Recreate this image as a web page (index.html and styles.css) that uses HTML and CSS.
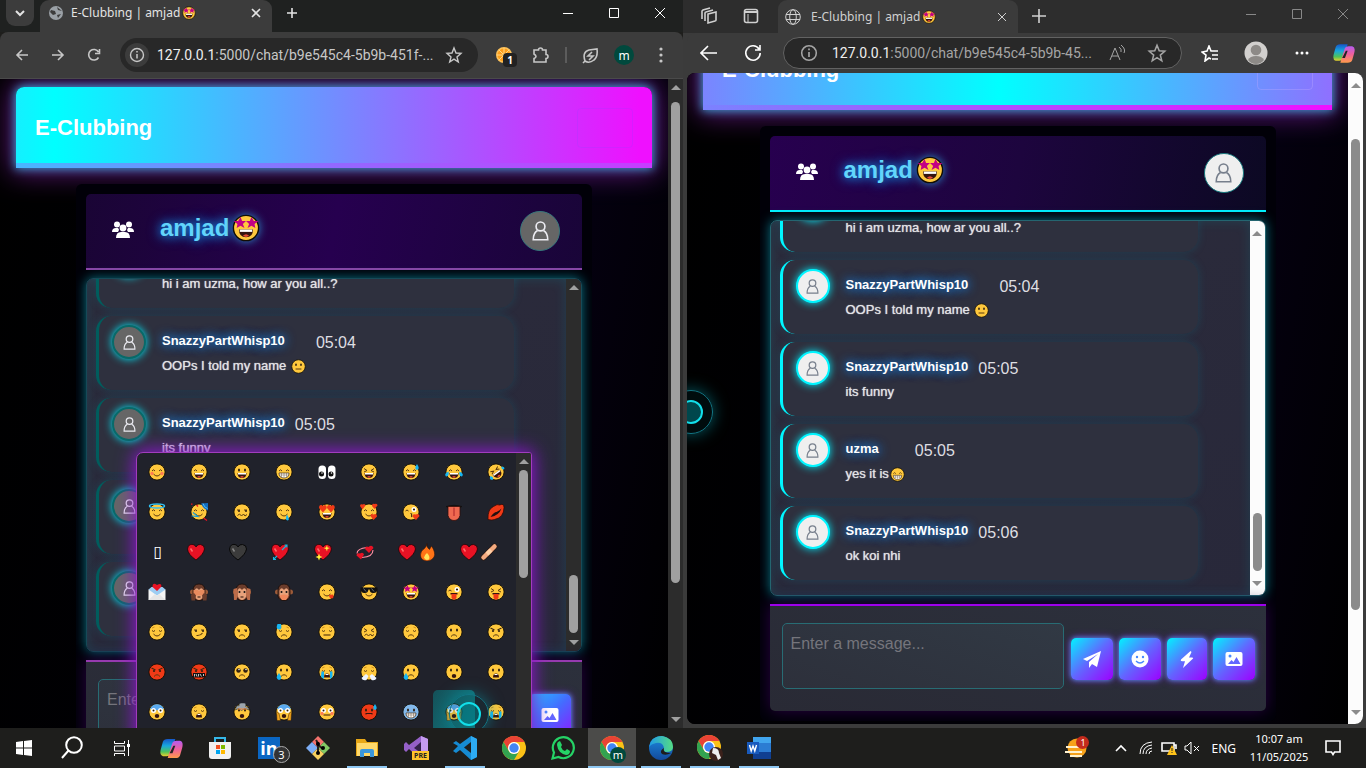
FILE: index.html
```html
<!DOCTYPE html>
<html lang="en">
<head>
<meta charset="utf-8">
<meta name="viewport" content="width=device-width, initial-scale=1">
<title>E-Clubbing | amjad</title>
<link rel="stylesheet" href="styles.css">
</head>
<body class="desktop">
<svg class="defs" aria-hidden="true">
  <defs>
    <linearGradient id="cp1" x1="0" y1="0" x2="0" y2="1"><stop offset="0" stop-color="#1657c9"/><stop offset=".4" stop-color="#18a7dd"/><stop offset=".75" stop-color="#4fc35a"/><stop offset="1" stop-color="#e8cf2c"/></linearGradient>
    <linearGradient id="cp2" x1="0" y1="0" x2="0" y2="1"><stop offset="0" stop-color="#b55bf0"/><stop offset=".5" stop-color="#f0609a"/><stop offset="1" stop-color="#ff9b4a"/></linearGradient>
    <linearGradient id="edge1" x1="0" y1="0" x2="1" y2="0"><stop offset="0" stop-color="#1f9be8"/><stop offset="1" stop-color="#55dc83"/></linearGradient>
    <linearGradient id="edge2" x1="0" y1="0" x2="0" y2="1"><stop offset="0" stop-color="#1c8be0"/><stop offset="1" stop-color="#134a9c"/></linearGradient>
  </defs>
  <symbol id="f" viewBox="0 0 36 36"><circle cx="18" cy="18" r="16.2" fill="#ffc83d" stroke="#120d04" stroke-width="1.8"/></symbol>
  <symbol id="fred" viewBox="0 0 36 36"><circle cx="18" cy="18" r="16.2" fill="#f03a17" stroke="#120d04" stroke-width="1.8"/></symbol>
  <symbol id="fblue" viewBox="0 0 36 36"><circle cx="18" cy="18" r="16.2" fill="#83b9eb" stroke="#120d04" stroke-width="1.8"/></symbol>
  <symbol id="brow" viewBox="0 0 36 36"><path d="M4 12A15 15 0 0 1 32 12Q18 17 4 12Z" fill="#5aa9ef"/></symbol>
  <symbol id="eh" viewBox="0 0 36 36"><path d="M8 16q3-5 6 0M22 16q3-5 6 0" fill="none" stroke="#5a3a10" stroke-width="2"/></symbol>
  <symbol id="ec" viewBox="0 0 36 36"><path d="M8 15q3 4 6 0M22 15q3 4 6 0" fill="none" stroke="#5a3a10" stroke-width="2"/><path d="M8 10l5-2M28 10l-5-2" stroke="#c98a1c" stroke-width="1.8"/></symbol>
  <symbol id="eo" viewBox="0 0 36 36"><ellipse cx="12" cy="14" rx="2" ry="3" fill="#302010"/><ellipse cx="24" cy="14" rx="2" ry="3" fill="#302010"/></symbol>
  <symbol id="el" viewBox="0 0 36 36"><path d="M8 14h6M22 14h6" stroke="#5a3a10" stroke-width="2"/><circle cx="12" cy="16" r="2" fill="#302010"/><circle cx="26" cy="16" r="2" fill="#302010"/></symbol>
  <symbol id="ex" viewBox="0 0 36 36"><path d="M8 11l6 4-6 3M28 11l-6 4 6 3" fill="none" stroke="#5a3a10" stroke-width="2"/></symbol>
  <symbol id="ew" viewBox="0 0 36 36"><circle cx="11" cy="15" r="5" fill="#fff"/><circle cx="25" cy="15" r="5" fill="#fff"/><circle cx="11" cy="15" r="2" fill="#302010"/><circle cx="25" cy="15" r="2" fill="#302010"/></symbol>
  <symbol id="ep" viewBox="0 0 36 36"><circle cx="11" cy="15" r="4.5" fill="#302010"/><circle cx="25" cy="15" r="4.5" fill="#302010"/><circle cx="12" cy="13" r="1.5" fill="#fff"/><circle cx="26" cy="13" r="1.5" fill="#fff"/></symbol>
  <symbol id="eheart" viewBox="0 0 36 36"><path d="M10 19L2 10Q2 3 7 4l3 2 3-2q6 0 4 7ZM26 19l-8-9q0-7 5-6l3 2 3-2q6 0 4 7Z" fill="#f03a17"/></symbol>
  <symbol id="estar" viewBox="0 0 36 36"><path d="M11 4l2 5 5 0-4 4 2 5-5-3-5 3 1-5-5-4 6 0ZM25 4l3 5 6 0-5 4 1 5-5-3-5 3 2-5-4-4 5 0Z" fill="#c30084"/></symbol>
  <symbol id="ewink" viewBox="0 0 36 36"><path d="M7 16q3-4 6 0" fill="none" stroke="#5a3a10" stroke-width="2"/><circle cx="24" cy="13" r="5" fill="#fff"/><circle cx="24" cy="13" r="2.2" fill="#302010"/></symbol>
  <symbol id="shades" viewBox="0 0 36 36"><path d="M1 9h34v4q-2 8-9 7-6 0-7-7h-2q-1 7-7 7-7 1-9-7Z" fill="#111"/><path d="M7 11l5 6M23 11l5 6" stroke="#69717b" stroke-width="2"/></symbol>
  <symbol id="angry" viewBox="0 0 36 36"><path d="M7 10l8 4M29 10l-8 4" stroke="#402a10" stroke-width="2.2"/><circle cx="12" cy="16" r="2.2" fill="#302010"/><circle cx="24" cy="16" r="2.2" fill="#302010"/></symbol>
  <symbol id="ms" viewBox="0 0 36 36"><path d="M11 22q7 8 14 0" fill="none" stroke="#5a3a10" stroke-width="2"/></symbol>
  <symbol id="mg" viewBox="0 0 36 36"><path d="M9 20h18q0 10-9 10T9 20Z" fill="#351410"/><path d="M10 20h16v3H10Z" fill="#fff"/><path d="M14 28q4-4 8 0-4 3-8 0" fill="#e64b34"/></symbol>
  <symbol id="mt" viewBox="0 0 36 36"><path d="M8 20h20q0 10-10 10T8 20Z" fill="#fff" stroke="#402a10" stroke-width="1.4"/><path d="M9 24h18M13 20v8M18 20v9M23 20v8" stroke="#70583c" stroke-width="1"/></symbol>
  <symbol id="mf" viewBox="0 0 36 36"><path d="M12 27q6-7 12 0" fill="none" stroke="#5a3a10" stroke-width="2"/></symbol>
  <symbol id="ml" viewBox="0 0 36 36"><path d="M11 24h14" stroke="#5a3a10" stroke-width="2.4"/></symbol>
  <symbol id="mk" viewBox="0 0 36 36"><path d="M13 25q8 1 12-5" fill="none" stroke="#5a3a10" stroke-width="2.2"/></symbol>
  <symbol id="mz" viewBox="0 0 36 36"><path d="M9 25l4-3 4 4 4-4 3 4 4-3" fill="none" stroke="#5a3a10" stroke-width="2"/></symbol>
  <symbol id="mo" viewBox="0 0 36 36"><ellipse cx="18" cy="26" rx="4.5" ry="4" fill="#351410"/></symbol>
  <symbol id="mcry" viewBox="0 0 36 36"><path d="M12 29q0-8 6-8t6 8Z" fill="#351410"/><path d="M15 22h6v2h-6Z" fill="#fff"/></symbol>
  <symbol id="tongue" viewBox="0 0 36 36"><path d="M11 20h14v3H11Z" fill="#351410"/><path d="M13 22h10v8q-5 7-10 0Z" fill="#f03a17"/></symbol>
  <symbol id="lick" viewBox="0 0 36 36"><path d="M22 24l8-1q3 6-2 8-6 0-6-7" fill="#f03a17"/></symbol>
  <symbol id="blush" viewBox="0 0 36 36"><circle cx="8" cy="21" r="3.3" fill="#ff7d52"/><circle cx="28" cy="21" r="3.3" fill="#ff7d52"/></symbol>
  <symbol id="sweat" viewBox="0 0 36 36"><path d="M30 2q7 10 0 12-7-2 0-12" fill="#16b5f2"/></symbol>
  <symbol id="sweatl" viewBox="0 0 36 36"><path d="M5 2h7q3 12-5 11-6-2-2-11" fill="#16b5f2"/></symbol>
  <symbol id="tears" viewBox="0 0 36 36"><path d="M7 17q-10 4-5 10 7 0 5-10M29 17q10 4 5 10-7 0-5-10" fill="#16b5f2"/></symbol>
  <symbol id="tear" viewBox="0 0 36 36"><path d="M8 20q9 12 0 14-9-3 0-14" fill="#16b5f2"/></symbol>
  <symbol id="streams" viewBox="0 0 36 36"><path d="M7 17h5v15q-3-1-6-5ZM24 17h5v10q-2 4-5 5Z" fill="#16b5f2"/></symbol>
  <symbol id="halo" viewBox="0 0 36 36"><ellipse cx="18" cy="6" rx="15" ry="4" fill="none" stroke="#30bdf0" stroke-width="3"/></symbol>
  <symbol id="party" viewBox="0 0 36 36"><path d="M22 1l14-1v15q-9-2-14-14" fill="#126fc0"/><path d="M26 1q2 8 9 10" fill="none" stroke="#55bdf0" stroke-width="2"/><path d="M3 26l13 1-10-8" fill="none" stroke="#169bd5" stroke-width="2.2"/><path d="M27 30l7 5M2 2h3M13 4l3 3" stroke="#e81224" stroke-width="2.5"/></symbol>
  <symbol id="drool" viewBox="0 0 36 36"><path d="M24 23q7 11 1 12-6-1-1-12" fill="#16b5f2"/></symbol>
  <symbol id="loves" viewBox="0 0 36 36"><path d="M5 13L0 6q0-5 5-3 5-3 6 2ZM29 12l-5-6q0-6 5-4 6-2 6 3ZM27 34l-6-8q0-6 6-3 7-3 7 4Z" fill="#f03a17"/></symbol>
  <symbol id="kiss" viewBox="0 0 36 36"><path d="M17 21q6 1 1 3 5 2 0 4" fill="none" stroke="#402a10" stroke-width="2"/><path d="M28 34l-7-7q0-6 6-4 7-3 8 3Z" fill="#f03a17"/></symbol>
  <symbol id="steam" viewBox="0 0 36 36"><path d="M12 22l-9 8q2 6 10 4l4-8M24 22l9 8q-2 6-10 4l-4-8" fill="#eef4ff"/></symbol>
  <symbol id="swear" viewBox="0 0 36 36"><path d="M6 20h24v9H6Z" fill="#111"/><path d="M9 22v5M12 22l2 5M17 22v5M20 22l3 5M27 22v4" stroke="#fff" stroke-width="1.5"/></symbol>
  <symbol id="boom" viewBox="0 0 36 36"><path d="M5 14q2-12 7-8-1-7 7-6 9-1 6 7 6 0 7 7l-8-3-7 4-6-4Z" fill="#9ca5ad" stroke="#222"/><path d="M10 12h17" stroke="#f68632" stroke-width="2"/></symbol>
  <symbol id="hands" viewBox="0 0 36 36"><path d="M3 17l5 4 3 14H4ZM33 17l-5 4-3 14h7Z" fill="#f3a51c" stroke="#39230a"/></symbol>
  <symbol id="rofl" viewBox="0 0 36 36"><use href="#f"/><g transform="rotate(-35 18 18)"><path d="M9 11l6 3-6 3M27 11l-6 3 6 3" fill="none" stroke="#5a3a10" stroke-width="2"/><path d="M9 19h18q0 11-9 11T9 19Z" fill="#351410"/><path d="M10 19h16v3H10Z" fill="#fff"/><path d="M14 28q4-4 8 0-4 3-8 0" fill="#e64b34"/></g><path d="M29 7q8 0 5 6-6 1-5-6M7 26q8 2 4 8-8 0-4-8" fill="#16b5f2"/></symbol>
  <symbol id="hf" viewBox="0 0 36 36"><path d="M18 34Q2 23 1 12 3 1 12 3q5 1 6 5 3-6 9-5 8 1 8 9-2 11-17 22Z" fill="#e81224" stroke="#170406" stroke-width="1.5"/><path d="M7 11l4 6" stroke="#ff6c69" stroke-width="3"/></symbol>
  <symbol id="hblack" viewBox="0 0 36 36"><path d="M18 34Q2 23 1 12 3 1 12 3q5 1 6 5 3-6 9-5 8 1 8 9-2 11-17 22Z" fill="#3b3b3b" stroke="#080808" stroke-width="2"/><path d="M7 11l4 6" stroke="#858585" stroke-width="3"/></symbol>
  <symbol id="arrow" viewBox="0 0 36 36"><path d="M6 32l6-6M22 14l9-9M27 4h5v5M5 28v5h5" fill="none" stroke="#18b6df" stroke-width="2.2"/></symbol>
  <symbol id="spark" viewBox="0 0 36 36"><path d="M26 4l1 5 5 1-5 2-1 5-2-5-5-2 5-1ZM10 21l2 5 5 2-5 2-2 5-2-5-5-2 5-2Z" fill="#fff13a"/></symbol>
  <symbol id="revolve" viewBox="0 0 36 36"><path d="M2 21q0-10 20-12M34 14q0 14-22 15" fill="none" stroke="#ff91a3" stroke-width="2.2"/><path d="M26 20l-8-8q1-7 7-4 7-6 10 2ZM10 33l-9-8q0-6 7-4 6-4 8 2Z" fill="#e81224"/></symbol>
  <symbol id="fire" viewBox="0 0 36 36"><path d="M18 1q-2 7 5 12l4-7q9 13 5 22-5 8-14 8Q5 35 5 24q0-8 8-13 5-5 5-10Z" fill="#ff7316" stroke="#321104"/><path d="M18 20q7 7 4 13-8 3-10-4 0-4 6-9" fill="#ffe35a"/></symbol>
  <symbol id="plaster" viewBox="0 0 36 36"><path d="M7 29L29 7" stroke="#30190c" stroke-width="11" stroke-linecap="round"/><path d="M7 29L29 7" stroke="#f3aa80" stroke-width="9" stroke-linecap="round"/><path d="M14 22l8-8" stroke="#ffd0a7" stroke-width="8"/></symbol>
  <symbol id="letter" viewBox="0 0 36 36"><path d="M1 13h34v21H1Z" fill="#f5f5f5"/><path d="M1 13l17 12 17-12-6-5H7Z" fill="#9dcdf2"/><path d="M1 34l13-12 4 4 4-4 13 12" fill="#e6e6e6"/><path d="M18 16l-9-8q0-8 6-6l3 2q9-5 9 3Z" fill="#e81224"/></symbol>
  <symbol id="monkey" viewBox="0 0 36 36"><circle cx="5" cy="18" r="5" fill="#9d5b39"/><circle cx="31" cy="18" r="5" fill="#9d5b39"/><path d="M6 16Q6 2 18 2t12 14v10q-2 9-12 9T6 26Z" fill="#6b3c2b" stroke="#170b05" stroke-width="1.5"/><path d="M9 15q4-8 9-1 5-7 9 1v11q-4 8-9 8t-9-8Z" fill="#e8a27b"/><circle cx="13" cy="18" r="2" fill="#111"/><circle cx="23" cy="18" r="2" fill="#111"/><path d="M15 28h6" stroke="#281008" stroke-width="2"/></symbol>
  <symbol id="see" viewBox="0 0 36 36"><path d="M7 14h9l2 3 2-3h9v8l-5 3H12l-5-3Z" fill="#e98b5e"/><path d="M2 24l6-4 4 5-2 10H3ZM34 24l-6-4-4 5 2 10h7Z" fill="#6b3c2b"/></symbol>
  <symbol id="hear" viewBox="0 0 36 36"><path d="M1 12l7-2 2 14-3 10H2ZM35 12l-7-2-2 14 3 10h5Z" fill="#bd6c49"/></symbol>
  <symbol id="speak" viewBox="0 0 36 36"><path d="M9 25l8-2h2l8 2-5 9h-8Z" fill="#f0885c"/></symbol>
  <symbol id="eyes" viewBox="0 0 36 36"><rect x="1" y="5" width="15" height="27" rx="7" fill="#fff"/><rect x="20" y="5" width="15" height="27" rx="7" fill="#fff"/><circle cx="7" cy="22" r="5" fill="#111"/><circle cx="26" cy="22" r="5" fill="#111"/><circle cx="8" cy="20" r="1.5" fill="#fff"/><circle cx="27" cy="20" r="1.5" fill="#fff"/></symbol>
  <symbol id="bigtongue" viewBox="0 0 36 36"><path d="M2 7q16-5 32 0l-6 2H8Z" fill="#26120d" stroke="#111" stroke-width="2"/><path d="M6 7h24v18q-3 10-12 10T6 25Z" fill="#ef6950" stroke="#2d0c09" stroke-width="1.5"/><path d="M18 9v17" stroke="#c23a35" stroke-width="3"/></symbol>
  <symbol id="lips" viewBox="0 0 36 36"><path d="M2 33Q1 12 13 7q8-6 12-3 9-4 9 5 0 20-19 24-5 2-13 0Z" fill="#f03a17" stroke="#330803" stroke-width="1.5"/><path d="M7 28q7-10 12-10 7-4 10-7-5 14-22 17" fill="#231010"/></symbol>
  <symbol id="user" viewBox="0 0 20 24"><circle cx="10" cy="6.5" r="5.3"/><path d="M6.500 11.500Q1.500 14 1.200 22.500h17.600Q18.500 14 13.500 11.500"/></symbol>
  <symbol id="users" viewBox="0 0 22 18"><g fill="#fff"><circle cx="5" cy="3.500" r="3"/><circle cx="17" cy="3.500" r="3"/><circle cx="11" cy="7" r="3.400"/><path d="M0 11q0-4 4-4h2q1 1 1 2l-1 2ZM22 11q0-4-4-4h-2l-1 2 1 2ZM4 17q0-6 5-6h4q5 0 5 6Z"/></g></symbol>
  <symbol id="info" viewBox="0 0 16 16"><circle cx="8" cy="8" r="6.500" fill="none" stroke="currentColor" stroke-width="1.400"/><path d="M8 7v4.500M8 4v1.600" stroke="currentColor" stroke-width="1.500"/></symbol>
  <symbol id="star" viewBox="0 0 18 18"><path d="M9 2l2 5 5 .4-4 3.500 1.300 5.100L9 13.200 4.700 16 6 10.900 2 7.400 7 7Z" fill="none" stroke="currentColor" stroke-width="1.400"/></symbol>
  <symbol id="image" viewBox="0 0 18 16"><rect x=".5" y="1" width="17" height="14" rx="2" fill="#fff"/><circle cx="5" cy="5" r="1.500" fill="#4989ff"/><path d="M3 13l3.500-4 2 2 3-5 4 7Z" fill="#6266ff"/></symbol>
  <symbol id="chrome" viewBox="0 0 24 24"><circle cx="12" cy="12" r="12" fill="#fbc116"/><path d="M1.600 6A12 12 0 0 1 22.400 6H12a6 6 0 0 0-5.200 9Z" fill="#e94335"/><path d="M1.600 6A12 12 0 0 0 12 24l5.200-9A6 6 0 0 1 6.800 15Z" fill="#32a350"/><circle cx="12" cy="12" r="6" fill="#fff"/><circle cx="12" cy="12" r="4.700" fill="#4285f4"/></symbol>
  <symbol id="copilot" viewBox="0 0 24 22"><path d="M8 1h8l-5 16q-1 2-4 2H3Q-1 18 1 11L3 4q1-3 5-3Z" fill="url(#cp1)"/><path d="M16 21H8l5-16q1-2 4-2h4q4 1 2 8l-2 7q-1 3-5 3Z" fill="url(#cp2)"/><path d="M14 8h2l-3 8h-3Z" fill="#242424"/></symbol>
</svg>

<main class="windows">
  <section class="window window-chrome" aria-label="Chrome">
    <header class="tabs">
      <button class="tab-search" aria-label="Search tabs"><svg width="10" height="7" viewBox="0 0 10 7"><path d="M1 1l4 4 4-4" class="line bold"/></svg></button>
      <div class="tab">
        <svg width="14" height="14" viewBox="0 0 14 14"><circle cx="7" cy="7" r="7" fill="#9aa0a6"/><path d="M2 4l4 1 1 3-3 1-3-3ZM8 1l1 3 4 1M8 9l4-1-3 4Z" fill="#3c3c3c"/></svg>
        <span class="tab-title">E-Clubbing | amjad<svg class="tiny-emoji" viewBox="0 0 36 36"><use href="#f"/><use href="#estar"/><use href="#mg"/></svg></span>
        <button aria-label="Close tab"><svg width="10" height="10" viewBox="0 0 10 10"><path d="M1 1l8 8M9 1L1 9" class="line"/></svg></button>
      </div>
      <button class="new-tab" aria-label="New tab"><svg width="12" height="12" viewBox="0 0 12 12"><path d="M6 1v10M1 6h10" class="line"/></svg></button>
      <div class="controls">
        <button aria-label="Minimize"><svg width="12" height="12" viewBox="0 0 12 12"><path d="M1 6.500h10" class="line thin"/></svg></button>
        <button aria-label="Maximize"><svg width="12" height="12" viewBox="0 0 12 12"><path d="M1.500 1.500h9v9h-9Z" class="line thin"/></svg></button>
        <button aria-label="Close"><svg width="12" height="12" viewBox="0 0 12 12"><path d="M1 1l10 10M11 1L1 11" class="line thin"/></svg></button>
      </div>
    </header>
    <nav class="toolbar">
      <button aria-label="Back"><svg width="14" height="14" viewBox="0 0 14 14"><path d="M13 7H2M7 2L2 7l5 5" class="line"/></svg></button>
      <button aria-label="Forward"><svg width="14" height="14" viewBox="0 0 14 14"><path d="M1 7h11M7 2l5 5-5 5" class="line"/></svg></button>
      <button aria-label="Reload"><svg width="14" height="14" viewBox="0 0 14 14"><path d="M11.500 9.500A5.300 5.300 0 1 1 11.500 4M12.500 1v4.500H8" class="line"/></svg></button>
      <div class="address">
        <span class="site-info"><svg width="16" height="16"><use href="#info"/></svg></span>
        <span class="url"><b>127.0.0.1</b>:5000/chat/b9e545c4-5b9b-451f-...</span>
        <button aria-label="Bookmark"><svg width="18" height="18"><use href="#star"/></svg></button>
      </div>
      <div class="tools">
        <button class="citrus" aria-label="Extension, 1"><svg width="18" height="18" viewBox="0 0 18 18"><circle cx="9" cy="9" r="8" fill="#ffc35a"/><circle cx="9" cy="9" r="6.500" fill="#ff9f1c"/><path d="M9 2v14M2 9h14M4 4l10 10M14 4L4 14" stroke="#ffd98c"/></svg><span>1</span></button>
        <button aria-label="Extensions"><svg width="18" height="18" viewBox="0 0 18 18"><path d="M2 4h4.500a2 2 0 0 1 4 0H14v4.500a2 2 0 0 1 0 4V16H2v-3.500q4-2 0-4.500Z" class="line"/></svg></button>
        <i class="divider"></i>
        <button aria-label="Energy saver"><svg width="17" height="17" viewBox="0 0 17 17"><path d="M3 14Q0 5 7 3l8-1q1 8-3 11-5 4-9 1ZM1 16l2-2M10 5L6 9h5l-4 4" class="line"/></svg></button>
        <button class="profile" aria-label="Profile">m</button>
        <button class="menu" aria-label="Menu"><svg width="4" height="16" viewBox="0 0 4 16" fill="currentColor"><circle cx="2" cy="2" r="1.600"/><circle cx="2" cy="8" r="1.600"/><circle cx="2" cy="14" r="1.600"/></svg></button>
      </div>
    </nav>
    <div class="viewport">
      <div class="page">
        <header class="site-header"><h1>E-Clubbing</h1><button class="ghost" aria-label="Account"></button></header>
        <section class="chat">
          <header class="chat-header">
            <button class="members" aria-label="Members"><svg width="22" height="18"><use href="#users"/></svg></button>
            <h2>amjad<svg class="title-emoji" viewBox="0 0 36 36"><use href="#f"/><use href="#estar"/><use href="#mg"/></svg></h2>
            <span class="avatar avatar-large"><svg viewBox="0 0 20 24"><use href="#user"/></svg></span>
          </header>
          <div class="log">
            <div class="messages">
              <article class="message"><span class="avatar"><svg viewBox="0 0 20 24"><use href="#user"/></svg></span><div class="message-copy"><strong></strong><p>hi i am uzma, how ar you all..?</p></div></article>
              <article class="message"><span class="avatar"><svg viewBox="0 0 20 24"><use href="#user"/></svg></span><div class="message-copy"><strong>SnazzyPartWhisp10</strong><p>OOPs I told my name <svg viewBox="0 0 36 36"><use href="#f"/><use href="#eo"/><use href="#ml"/></svg></p></div><time>05:04</time></article>
              <article class="message"><span class="avatar"><svg viewBox="0 0 20 24"><use href="#user"/></svg></span><div class="message-copy"><strong>SnazzyPartWhisp10</strong><p>its funny</p></div><time>05:05</time></article>
              <article class="message"><span class="avatar"><svg viewBox="0 0 20 24"><use href="#user"/></svg></span></article>
              <article class="message"><span class="avatar"><svg viewBox="0 0 20 24"><use href="#user"/></svg></span></article>
            </div>
            <div class="scrollbar scrollbar-end"><i class="up"></i><div><b style="height:17%"></b></div><i class="down"></i></div>
          </div>
          <form class="composer">
            <textarea aria-label="Message" placeholder="Enter a message..."></textarea>
            <button type="button" aria-label="Send"></button><button type="button" aria-label="Emoji"></button><button type="button" class="narrow" aria-label="Quick reply"></button><button type="button" aria-label="Image"><svg width="18" height="16"><use href="#image"/></svg></button>
          </form>
        </section>
      </div>
      <div class="scrollbar scrollbar-page"><i class="up"></i><div><b style="height:79%"></b></div><i class="down"></i></div>
      <div class="picker"><div class="emoji-grid" id="emoji-grid"></div><div class="scrollbar"><i class="up"></i><div><b></b></div></div></div>
      <i class="cursor cursor-left"></i>
    </div>
  </section>

  <section class="window window-edge" aria-label="Edge">
    <header class="tabs">
      <button class="edge-icon" aria-label="Workspaces"><svg width="18" height="18" viewBox="0 0 18 18"><path d="M8 7l8-2v8q0 1-1 1l-7 2ZM5 14V6q0-1 1-1l7-2M2 12V4l1-1 7-2" class="line"/></svg></button>
      <button class="edge-icon" aria-label="Tab actions"><svg width="16" height="16" viewBox="0 0 16 16"><rect x="1.500" y="1.500" width="13" height="13" rx="2" class="line"/><path d="M2 4h12" class="line bold"/><path d="M5 6v8" class="line thin"/></svg></button>
      <div class="tab">
        <svg width="16" height="16" viewBox="0 0 16 16"><circle cx="8" cy="8" r="7.300" class="line thin"/><ellipse cx="8" cy="8" rx="3.300" ry="7.300" class="line thin"/><path d="M1 5.500h14M1 10.500h14" class="line thin"/></svg>
        <span class="tab-title">E-Clubbing | amjad<svg class="tiny-emoji" viewBox="0 0 36 36"><use href="#f"/><use href="#estar"/><use href="#mg"/></svg></span>
        <button aria-label="Close tab"><svg width="10" height="10" viewBox="0 0 10 10"><path d="M1 1l8 8M9 1L1 9" class="line thin"/></svg></button>
      </div>
      <button class="new-tab" aria-label="New tab"><svg width="16" height="16" viewBox="0 0 16 16"><path d="M8 1v14M1 8h14" class="line"/></svg></button>
      <div class="controls">
        <button aria-label="Minimize"><svg width="12" height="12" viewBox="0 0 12 12"><path d="M1 6.500h10" class="line thin"/></svg></button>
        <button aria-label="Maximize"><svg width="12" height="12" viewBox="0 0 12 12"><path d="M1.500 1.500h9v9h-9Z" class="line thin"/></svg></button>
        <button aria-label="Close"><svg width="12" height="12" viewBox="0 0 12 12"><path d="M1 1l10 10M11 1L1 11" class="line thin"/></svg></button>
      </div>
    </header>
    <nav class="toolbar">
      <button aria-label="Back"><svg width="18" height="16" viewBox="0 0 18 16"><path d="M17 8H2M8 1L1 8l7 7" class="line"/></svg></button>
      <button aria-label="Reload"><svg width="18" height="18" viewBox="0 0 18 18"><path d="M15 5A7.200 7.200 0 1 0 16.200 9M16 1v5h-5" class="line"/></svg></button>
      <div class="address">
        <svg width="18" height="18"><use href="#info"/></svg>
        <span class="url"><b>127.0.0.1</b>:5000/chat/b9e545c4-5b9b-45...</span>
        <button aria-label="Read aloud"><svg width="18" height="16" viewBox="0 0 18 16"><path d="M2 15L7 3l5 12M4 11h6M11 2q3 2 2 5M13 0q5 4 3 8" class="line thin"/></svg></button>
        <button aria-label="Favorite"><svg width="20" height="20"><use href="#star"/></svg></button>
      </div>
      <div class="tools">
        <button aria-label="Favorites"><svg width="18" height="17" viewBox="0 0 18 17"><path d="M10 14l-2-1-4 3 1-6-4-3 5-1 2-5 2 5h7M11 10h6M11 14h6" class="line"/></svg></button>
        <button aria-label="Profile"><svg width="24" height="24" viewBox="0 0 24 24"><circle cx="12" cy="12" r="11.500" fill="#d2d0ce"/><circle cx="12" cy="9" r="5.300" fill="#8d8a87"/><path d="M4 19q2-4 8-4t8 4q-3 4-8 4t-8-4" fill="#8d8a87"/></svg></button>
        <button aria-label="Menu"><svg width="14" height="4" viewBox="0 0 14 4" fill="currentColor"><circle cx="2" cy="2" r="1.500"/><circle cx="7" cy="2" r="1.500"/><circle cx="12" cy="2" r="1.500"/></svg></button>
        <button class="copilot" aria-label="Copilot"><svg width="22" height="21"><use href="#copilot"/></svg></button>
      </div>
    </nav>
    <div class="viewport">
      <div class="page">
        <header class="site-header"><h1>E-Clubbing</h1><button class="ghost" aria-label="Account"></button></header>
        <section class="chat">
          <header class="chat-header">
            <button class="members" aria-label="Members"><svg width="22" height="18"><use href="#users"/></svg></button>
            <h2>amjad<svg class="title-emoji" viewBox="0 0 36 36"><use href="#f"/><use href="#estar"/><use href="#mg"/></svg></h2>
            <span class="avatar avatar-large"><svg viewBox="0 0 20 24"><use href="#user"/></svg></span>
          </header>
          <div class="log">
            <div class="messages">
              <article class="message"><span class="avatar"><svg viewBox="0 0 20 24"><use href="#user"/></svg></span><div class="message-copy"><strong></strong><p>hi i am uzma, how ar you all..?</p></div></article>
              <article class="message"><span class="avatar"><svg viewBox="0 0 20 24"><use href="#user"/></svg></span><div class="message-copy"><strong>SnazzyPartWhisp10</strong><p>OOPs I told my name <svg viewBox="0 0 36 36"><use href="#f"/><use href="#eo"/><use href="#ml"/></svg></p></div><time>05:04</time></article>
              <article class="message"><span class="avatar"><svg viewBox="0 0 20 24"><use href="#user"/></svg></span><div class="message-copy"><strong>SnazzyPartWhisp10</strong><p>its funny</p></div><time>05:05</time></article>
              <article class="message"><span class="avatar"><svg viewBox="0 0 20 24"><use href="#user"/></svg></span><div class="message-copy"><strong>uzma</strong><p>yes it is<svg viewBox="0 0 36 36"><use href="#f"/><use href="#eh"/><use href="#mt"/></svg></p></div><time>05:05</time></article>
              <article class="message"><span class="avatar"><svg viewBox="0 0 20 24"><use href="#user"/></svg></span><div class="message-copy"><strong>SnazzyPartWhisp10</strong><p>ok koi nhi</p></div><time>05:06</time></article>
            </div>
            <div class="scrollbar scrollbar-end"><i class="up"></i><div><b style="height:17%"></b></div><i class="down"></i></div>
          </div>
          <form class="composer">
            <textarea aria-label="Message" placeholder="Enter a message..."></textarea>
            <button type="button" aria-label="Send"><svg width="18" height="17" viewBox="0 0 18 17"><path d="M18 0L0 8l4 2L15 3 6 11v6l3-4 5 3Z" fill="#fff"/></svg></button>
            <button type="button" aria-label="Emoji"><svg width="18" height="18" viewBox="0 0 18 18"><circle cx="9" cy="9" r="8.500" fill="#fff"/><circle cx="6" cy="7" r="1.200" fill="#4989ff"/><circle cx="12" cy="7" r="1.200" fill="#4989ff"/><path d="M5 11q4 4 8 0" fill="none" stroke="#4989ff" stroke-width="1.300"/></svg></button>
            <button type="button" class="narrow" aria-label="Quick reply"><svg width="14" height="17" viewBox="0 0 14 17"><path d="M10.500 0L1 8.500Q0 10 2 10.300h3L3 17l9.500-9Q14 6.600 12 6.400H9L11.500 1Z" fill="#fff"/></svg></button>
            <button type="button" aria-label="Image"><svg width="18" height="16"><use href="#image"/></svg></button>
          </form>
        </section>
      </div>
      <div class="scrollbar scrollbar-page"><i class="up"></i><div><b style="height:84%"></b></div><i class="down"></i></div>
      <i class="cursor cursor-right"></i>
    </div>
  </section>
</main>

<footer class="taskbar">
  <div class="apps">
    <button aria-label="Start"><svg width="16" height="16" viewBox="0 0 16 16"><path d="M0 2l7-1v6.500H0ZM8 1l8-1v7.500H8ZM0 8.500h7V15l-7-1ZM8 8.500h8V16l-8-1Z" fill="#fff"/></svg></button>
    <button aria-label="Search"><svg width="24" height="24" viewBox="0 0 24 24"><circle cx="13" cy="9" r="7.800" class="line bold"/><path d="M7.500 14.500L1 22" class="line bold"/></svg></button>
    <button aria-label="Task view"><svg width="18" height="18" viewBox="0 0 18 18"><path d="M1.500 2v2.500h10V2M1.500 7h10v5h-10ZM1.500 17v-2.500h10V17M15.500 1v16" class="line thin"/><path d="M14 5h3v3h-3Z" fill="#fff"/></svg></button>
    <button aria-label="Copilot"><svg width="23" height="21"><use href="#copilot"/></svg></button>
    <button aria-label="Store"><svg width="24" height="24" viewBox="0 0 24 24"><path d="M7 7V2h10v5" fill="none" stroke="#35b8e8" stroke-width="2"/><path d="M1 6h22v14q0 3-3 3H4q-3 0-3-3Z" fill="#f1f1f1"/><path d="M8 9h4v4H8Z" fill="#f25022"/><path d="M13 9h4v4h-4Z" fill="#7fba00"/><path d="M8 14h4v4H8Z" fill="#00a4ef"/><path d="M13 14h4v4h-4Z" fill="#ffb900"/></svg></button>
    <button class="linkedin" aria-label="LinkedIn, 3"><b>in</b><span>3</span></button>
    <button aria-label="Git"><svg width="24" height="24" viewBox="0 0 24 24"><path d="M12 0l6 6-6 6-6-6Z" fill="#f5736d"/><path d="M6 6l6 6-6 6-6-6Z" fill="#7daef5"/><path d="M18 6l6 6-6 6-6-6Z" fill="#82c864"/><path d="M12 12l6 6-6 6-6-6Z" fill="#f6d05e"/><path d="M10 4l2 3v10M12 9l5 4" stroke="#2a211c" stroke-width="2"/><circle cx="12" cy="8" r="2"/><circle cx="12" cy="17" r="2"/><circle cx="17" cy="12" r="2"/></svg></button>
    <button class="running" aria-label="File Explorer"><svg width="22" height="20" viewBox="0 0 22 20"><path d="M0 1h9l2 3h11v14H0Z" fill="#e8a817"/><path d="M1 5h20v13H1Z" fill="#ffd96b"/><path d="M4 19v-6q0-2 2-2h10q2 0 2 2v6h-4v-4H8v4Z" fill="#3b97dc"/></svg></button>
    <button class="studio" aria-label="Visual Studio Preview"><svg width="24" height="24" viewBox="0 0 24 24"><path d="M17 0l7 3v18l-7 3L5 13l-3 3-2-2V8l2-2 3 3Z" fill="#9560c8"/><path d="M17 6v11l-7-5Z" fill="#33214a"/><path d="M17 0l7 3v18l-7 3Z" fill="#c59bf0"/></svg><span>PRE</span></button>
    <button class="running" aria-label="Visual Studio Code"><svg width="24" height="24" viewBox="0 0 24 24"><path d="M18 0l6 3v18l-6 3L7 14l-4 3-3-2 5-5L0 7l3-2 4 3Z" fill="#168bd2"/><path d="M18 6v11l-7-5.500Z" fill="#1e1e1c"/><path d="M18 0l6 3v18l-6 3Z" fill="#2dabf2"/></svg></button>
    <button aria-label="Chrome"><svg width="24" height="24"><use href="#chrome"/></svg></button>
    <button aria-label="WhatsApp"><svg width="24" height="24" viewBox="0 0 24 24"><path d="M1.500 22.500l1.500-6A10.500 10.500 0 1 1 7.500 21Z" fill="none" stroke="#25d366" stroke-width="2.200"/><path d="M7 6l2-1 2 4-1 2q1 3 4 4l2-2 3 2q0 4-4 4Q7 17 6 9q0-2 1-3" fill="#25d366"/></svg></button>
    <button class="running active" aria-label="Chrome, profile m"><svg width="24" height="24"><use href="#chrome"/></svg><span class="app-profile">m</span></button>
    <button class="running" aria-label="Edge"><svg width="24" height="24" viewBox="0 0 24 24"><circle cx="12" cy="12" r="12" fill="url(#edge2)"/><path d="M0 11Q2 0 13 0q11 2 11 11 0 5-7 5-4 0-2-4-1-6-8-5-5 1-7 4Z" fill="url(#edge1)"/><path d="M15 12q-2 5 7 5-5 3-9 1-3-3 2-6Z" fill="#1e1e1c"/></svg></button>
    <button class="running" aria-label="Chrome, second profile"><svg width="26" height="26" viewBox="0 0 26 26"><use href="#chrome" width="24" height="24"/><circle cx="19" cy="19" r="7" fill="#3b211b"/><path d="M16 13q6 0 6 5l2 5-3 2-2-5-4-2Z" fill="#eee"/></svg></button>
    <button class="running" aria-label="Word"><svg width="24" height="22" viewBox="0 0 24 22"><path d="M6 0h18v22H6Z" fill="#2b7cd3"/><path d="M6 0h18v6H6Z" fill="#41a5ee"/><path d="M6 15h18v7H6Z" fill="#103f91"/><path d="M0 5h12v12H0Z" fill="#185abd"/><path d="M2.500 8l1.700 6L6 9l1.800 5 1.700-6" fill="none" stroke="#fff" stroke-width="1.400"/></svg></button>
  </div>
  <div class="tray">
    <button class="news" aria-label="Widgets, 1"><svg width="22" height="22" viewBox="0 0 22 22"><circle cx="12" cy="11" r="9.500" fill="#f7a21b"/><path d="M1 10h18M0 15h17M5 19h12" stroke="#fff2cf" stroke-width="2"/></svg><span>1</span></button>
    <button class="chevron" aria-label="Hidden icons"><svg width="12" height="8" viewBox="0 0 12 8"><path d="M1 7l5-5 5 5" class="line"/></svg></button>
    <button aria-label="Network"><svg width="14" height="14" viewBox="0 0 14 14"><path d="M1 13Q1 2 13 1M4 13Q4 5 13 4M7 13q0-5 6-6M10 13q0-3 3-3" class="line thin"/></svg></button>
    <button aria-label="Battery"><svg width="16" height="14" viewBox="0 0 16 14"><path d="M1 2h12v8H1ZM13 4h2v4" class="line"/><path d="M11 4l5 10H6Z" fill="#ffc21a"/><path d="M11 7v3M11 11v1" stroke="#222"/></svg></button>
    <button aria-label="Muted"><svg width="16" height="14" viewBox="0 0 16 14"><path d="M1 5h2l4-4v12L3 9H1ZM10 5l5 5M15 5l-5 5" class="line thin"/></svg></button>
    <span class="language">ENG</span>
    <time class="clock">10:07 am<br>11/05/2025</time>
    <button class="notifications" aria-label="Notifications"><svg width="16" height="16" viewBox="0 0 16 16"><path d="M1 1h14v11H9.500L8 14.500 6.500 12H1Z" class="line"/></svg></button>
  </div>
</footer>
<script src="emoji.js"></script>
</body>
</html>
```

FILE: styles.css
```css
* { box-sizing: border-box; }
body, h1, h2, p { margin: 0; }
button { padding: 0; border: 0; background: none; color: inherit; font: inherit; display: inline-flex; align-items: center; justify-content: center; }
svg { flex: none; }
.defs { position: absolute; width: 0; height: 0; }
.line { fill: none; stroke: currentColor; stroke-width: 1.6; }
.line.bold { stroke-width: 2; }
.line.thin { stroke-width: 1; }

.desktop { height: 100vh; display: flex; flex-direction: column; overflow: hidden; background: #1e1e1c; color: #fff; font-family: "Liberation Sans", Arial, sans-serif; }
.windows { flex: 1; min-height: 0; display: flex; }
.window { flex: 0 0 50%; min-width: 0; display: flex; flex-direction: column; overflow: hidden; }
.tabs, .toolbar, .taskbar { font-family: "Noto Sans", "Open Sans", sans-serif; }

/* Browser frames */
.tabs { display: flex; height: 32px; background: #1f2120; color: #e3e3e3; }
.tab-search { width: 28px; height: 26px; margin-left: 6px; background: #3c3c3c; border-radius: 0 0 9px 9px; }
.tab { display: flex; align-items: center; gap: 8px; width: 232px; margin-left: 6px; padding: 0 11px 6px 9px; background: #3c3c3c; border-radius: 9px 9px 0 0; }
.tab-title { flex: 1; display: flex; align-items: center; font-size: 12px; line-height: 16px; white-space: nowrap; }
.tiny-emoji { width: 14px; height: 14px; margin-left: 2px; }
.new-tab { width: 40px; height: 25px; }
.controls { display: flex; margin-left: auto; height: 25px; color: #fff; }
.controls button { width: 46px; }
.toolbar { display: flex; align-items: center; height: 47px; background: #3c3c3c; border-bottom: 1px solid #4a4a4a; border-radius: 8px 8px 0 0; color: #c7c7c7; padding: 0 20px 0 4px; }
.toolbar > button { width: 36px; height: 32px; }
.address { flex: 1; min-width: 0; display: flex; align-items: center; height: 34px; border-radius: 17px; background: #282828; }
.window-chrome .address { margin-left: 8px; padding: 0 15px 0 5px; gap: 8px; }
.site-info { width: 24px; height: 24px; border-radius: 50%; background: #3c3c3c; display: grid; place-items: center; }
.url { flex: 1; min-width: 0; font: 14px/20px Roboto, "Noto Sans", sans-serif; white-space: nowrap; }
.url b { font-weight: 400; color: #eee; }
.tools { display: flex; align-items: center; }
.window-chrome .tools { gap: 15px; margin-left: 17px; }
.divider { width: 2px; height: 16px; background: #5c5c5c; }
.citrus { position: relative; width: 22px; justify-content: flex-start; }
.citrus span { position: absolute; left: 8px; top: 7px; width: 14px; height: 14px; border-radius: 4px; background: #222; color: #fff; font: bold 10px/14px "Noto Sans", sans-serif; }
.profile { width: 20px; height: 20px; border-radius: 50%; background: #00493d; color: #fff; font-size: 12px; }
.tools .menu { margin-left: 10px; }

.window-edge { background: #3b3b3b; padding: 0 3px 4px 4px; }
.window-edge .tabs { height: 33px; margin: 0 -3px 0 -4px; background: #2d2d2d; color: #d0d0d0; }
.window-edge .edge-icon { width: 42px; height: 32px; margin-left: 5px; }
.window-edge .edge-icon + .edge-icon { margin-left: 0; }
.window-edge .tab { width: 240px; background: #3b3b3b; padding: 0 11px 0 7px; gap: 10px; margin-left: 6px; }
.window-edge .new-tab { width: 42px; height: 32px; }
.window-edge .controls { color: #888; height: 27px; }
.window-edge .toolbar { height: 40px; background: #3b3b3b; border: 0; color: #fff; padding: 0; }
.window-edge .toolbar > button { width: 44px; }
.window-edge .address { height: 32px; margin-left: 8px; padding: 0 11px 0 16px; gap: 14px; border: 1px solid #626262; color: #a5a5a5; }
.window-edge .address > button { width: 26px; }
.window-edge .tools { margin-left: 5px; }
.window-edge .tools > button { width: 46px; }
.window-edge .tools > .copilot { width: 38px; }

/* Chat page */
.viewport { position: relative; flex: 1; min-height: 0; display: flex; overflow: hidden; background: #000; }
.window-edge .viewport { border-radius: 8px; }
.page { flex: 1; min-width: 0; background: linear-gradient(100deg, #000 0%, #010006 50%, #04000f 78%, #000 100%); }
.window-edge .page { margin-top: -52px; }
.site-header { display: flex; align-items: center; justify-content: space-between; height: 81px; margin: 8px 16px 0; padding: 0 19px; border-radius: 8px 8px 0 0; background: linear-gradient(90deg, #48b7ff, #9368ff 50%, #c73cff) bottom / 100% 5px no-repeat, linear-gradient(90deg, #14f0ff, #00ffff 6%, #ef10ff 98%); box-shadow: 0 0 10px 1px #3a9fd0, 0 0 28px 4px #6b1a8a; }
.window-edge .site-header { background: linear-gradient(90deg, #7b82ff, #b249ff 50%, #f010ff) bottom / 100% 5px no-repeat, linear-gradient(90deg, #7b84ff, #00ffff 47%, #8f70ff); }
.site-header h1 { font-size: 22px; line-height: 26px; }
.ghost { width: 56px; height: 40px; border: 1px solid rgba(110, 80, 255, .15); border-radius: 4px; }
.window-edge .ghost { border-color: rgba(190, 170, 255, .35); }
.chat { width: 516px; max-width: 100%; margin: 16px auto 0; padding: 10px; display: flex; flex-direction: column; gap: 8px; border-radius: 6px; overflow: hidden; background: #010008; }
.chat-header { display: flex; align-items: center; height: 76px; padding: 0 22px 2px 26px; border-bottom: 2px solid #8d46a8; border-radius: 5px 5px 0 0; background: linear-gradient(100deg, #1a0535, #26004f 50%, #190538); }
.window-edge .chat-header { border-color: #00f3ff; background: linear-gradient(100deg, #27004f, #1d053e 50%, #0c0923); }
.members { width: 22px; }
.chat-header h2 { display: flex; align-items: center; flex: 1; margin-left: 26px; color: #62d5fb; font-size: 24px; line-height: 30px; text-shadow: 0 0 10px #1680d0, 0 0 14px #1675dc; padding-bottom: 5px; }
.title-emoji { width: 28px; height: 28px; margin-left: 3px; filter: drop-shadow(0 0 5px #2c8dcd); }
.avatar { flex: none; display: grid; place-items: center; width: 34px; height: 34px; border: 2px solid #096969; border-radius: 50%; background: #666; box-shadow: 0 0 8px #00efff; }
.avatar svg { width: 13px; height: 15px; fill: none; stroke: #ececf2; stroke-width: 2; }
.avatar.avatar-large { width: 40px; height: 40px; margin-top: 2px; border: 1px solid #37777c; box-shadow: none; }
.avatar-large svg { width: 17px; height: 20px; }
.window-edge .avatar { background: #efefef; border-color: #00f5ff; }
.window-edge .avatar svg { stroke: #777f8c; }
.window-edge .avatar.avatar-large { border-color: #16777c; }
.log { display: flex; height: 374px; overflow: hidden; border: 1px solid #174a58; border-radius: 7px; background: linear-gradient(160deg, #2b2b3b, #28283a); box-shadow: 0 0 12px #087082; }
.window-edge .log { height: 376px; border-color: #246570; }
.messages { flex: 1; min-width: 0; display: flex; flex-direction: column; justify-content: flex-end; gap: 8px; padding: 0 52px 15px 9px; box-shadow: inset 0 0 12px rgba(0, 180, 190, .18); }
.message { flex: none; display: flex; align-items: flex-start; width: 100%; max-width: 418px; height: 74px; padding: 9px 13px; border-left: 3px solid #005d5d; border-radius: 15px; background: #2e303e; box-shadow: 0 0 10px rgba(0, 150, 170, .22); }
.window-edge .message { border-color: #00f6ff; }
.message-copy { margin-left: 16px; font-size: 13px; line-height: 18px; padding-top: 7px; white-space: nowrap; color: #e3e3e7; }
.message-copy strong { display: block; height: 25px; color: #fff; text-shadow: 0 0 10px #1c7fd8, 0 0 12px #1c70c4; }
.message-copy p { display: flex; align-items: center; white-space: pre; text-shadow: 0 0 1px #ddd; }
.message-copy p svg { width: 15px; height: 15px; margin-left: 1px; }
.message time { margin-left: 10px; padding-top: 8px; font-size: 16px; line-height: 20px; color: #dedee2; }
.composer { display: flex; align-items: center; gap: 6px; height: 107px; padding: 1px 11px 0 12px; border-top: 2px solid #963aaf; border-radius: 0 0 5px 5px; background: linear-gradient(15deg, #292a35, #2c303c); box-shadow: 0 0 16px #290044; }
.window-edge .composer { border-color: #9d00ed; }
.composer textarea { flex: 1; min-width: 0; height: 66px; margin-right: 1px; margin-bottom: 7px; padding: 10px 8px; border: 1px solid #286c74; border-radius: 5px; resize: none; background: linear-gradient(20deg, #2d303b, #313944); font: 16px/20px "Liberation Sans", Arial, sans-serif; color: #ddd; }
.composer textarea::placeholder { color: #75757c; }
.composer button { width: 42px; height: 42px; border-radius: 5px; background: linear-gradient(135deg, #00f4ff, #6266ff 50%, #9e00ff); box-shadow: 0 0 5px #4ba1ec, 0 0 9px #7320b8; }
.composer .narrow { width: 40px; }
.window-chrome .composer button { background: linear-gradient(135deg, #20c9ff, #446cff 50%, #8b1cff); }

.scrollbar { flex: none; width: 15px; display: flex; flex-direction: column; align-items: center; background: #2c2c2c; color: #a0a0a0; }
.scrollbar i { width: 15px; height: 17px; display: grid; place-items: center; }
.scrollbar i::before { content: ""; border: 5px solid transparent; border-top: 0; border-bottom-color: currentColor; }
.scrollbar .down::before { border: 5px solid transparent; border-bottom: 0; border-top-color: currentColor; }
.scrollbar > div { flex: 1; min-height: 0; width: 9px; display: flex; flex-direction: column; }
.scrollbar b { display: block; min-height: 58px; border-radius: 5px; background: currentColor; }
.scrollbar-page > div { padding-top: 6px; }
.scrollbar-end > div { justify-content: flex-end; padding-bottom: 1px; }
.window-edge .scrollbar { background: #fcfcfc; color: #8b8b8b; }
.window-edge .scrollbar i { height: 24px; }
.window-edge .scrollbar-page > div { padding-top: 42px; }
.window-edge .scrollbar-end > div { padding-bottom: 0; }

.picker { position: absolute; left: 136px; top: 373px; bottom: -20px; width: 396px; display: flex; overflow: hidden; border: 1px solid #a13dbd; border-radius: 7px 3px 0 0; background: #20222b; box-shadow: 0 0 18px 2px #8a15cd; }
.emoji-grid { flex: 1; padding: 10px 11px; display: flex; flex-direction: column; gap: 22px; }
.emoji-row { display: flex; justify-content: space-between; height: 18px; }
.emoji-row.mixed { padding: 0 7px 0 5px; }
.emoji-row button { gap: 2px; height: 18px; position: relative; }
.emoji-row svg { width: 18px; height: 18px; }
.emoji-row .unknown { width: 10px; font: 16px/18px "DejaVu Sans", sans-serif; }
.emoji-row .hovered::before { content: ""; position: absolute; width: 42px; height: 42px; left: -12px; top: -13px; border-radius: 5px; background: linear-gradient(120deg, #155159, #127b82); }
.emoji-row .hovered svg { position: relative; }
.picker b { height: 108px; }
.cursor { position: absolute; border: 1px solid #127786; border-radius: 50%; width: 40px; height: 40px; box-shadow: 0 0 16px rgba(7, 151, 166, .6); background: rgba(0, 80, 90, .15); display: grid; place-items: center; }
.cursor::before { content: ""; width: 20px; height: 20px; border: 2px solid #12dfea; border-radius: 50%; background: rgba(0, 130, 140, .5); }
.cursor-left { left: 449px; top: 615px; }
.cursor-right { left: -18px; top: 317px; width: 44px; height: 44px; }

/* Taskbar */
.taskbar { height: 40px; display: flex; justify-content: space-between; background: #1e1e1c; color: #fff; position: relative; }
.apps { display: flex; gap: 1px; }
.apps > button { position: relative; width: 48px; height: 40px; }
.apps .running::after { content: ""; position: absolute; bottom: 0; left: 4px; right: 4px; height: 2px; background: #8fc8f3; }
.apps .active { background: #4b4b49; }
.apps .active::after { left: 0; right: 0; }
.linkedin b { width: 22px; height: 22px; background: #0a66c2; font: bold 18px/22px "Open Sans", sans-serif; }
.linkedin span { position: absolute; left: 28px; top: 18px; width: 17px; height: 17px; border: 1px solid #aaa; border-radius: 50%; background: #333; font-size: 11px; line-height: 15px; }
.studio span { position: absolute; left: 20px; top: 23px; width: 17px; height: 9px; background: #ffc52b; color: #222; font: bold 7px/9px "Noto Sans", sans-serif; }
.app-profile { position: absolute; right: 10px; bottom: 5px; width: 16px; height: 16px; border-radius: 50%; background: #00493d; font-size: 11px; line-height: 15px; }
.tray { display: flex; align-items: center; padding-right: 25px; }
.tray > button { width: 23px; height: 40px; }
.tray .news { position: relative; width: 24px; margin-right: 20px; }
.news span { position: absolute; left: 12px; top: 8px; width: 13px; height: 13px; border-radius: 50%; background: #c42b1c; font-size: 9px; line-height: 13px; }
.tray .chevron { width: 26px; }
.language { font-size: 12px; margin-left: 8px; }
.clock { width: 64px; margin-left: 11px; text-align: center; font-size: 11px; line-height: 18px; white-space: nowrap; }
.tray .notifications { width: 16px; margin-left: 14px; }
```

FILE: emoji.js
```js
// Each emoji is a label followed by the symbols layered to draw it.
const rows = [
  ["blushing:f eh ms blush", "grinning:f eh mg", "smiling:f eo mg", "beaming:f eh mt", "eyes:eyes", "squinting:f ex mg", "sweat smile:f eh mg sweat", "joy:f eh mg tears", "rolling laughter:rofl"],
  ["halo:f eh ms halo", "party:f eh ms party", "woozy:f el mz", "drooling:f eh ms drool", "heart eyes:f eheart mg", "in love:f eh ms loves", "kiss:f ewink kiss", "tongue:bigtongue", "lips:lips"],
  ["unknown:", "heart:hf", "black heart:hblack", "arrow heart:hf arrow", "sparkling heart:hf spark", "revolving hearts:revolve", "heart on fire:hf+fire", "mending heart:hf+plaster"],
  ["love letter:letter", "see no evil:monkey see", "hear no evil:monkey hear", "speak no evil:monkey speak", "yum:f eh ms lick", "cool:f shades ms", "star struck:f estar mg", "winking tongue:f ewink tongue", "squinting tongue:f ex tongue"],
  ["relieved:f ec ms", "smirk:f el mk", "unamused:f el mf", "cold sweat:f ec mf sweatl", "pensive:f ec ml", "confounded:f ex mz", "disappointed:f ec mf", "worried:f eo mf", "angry:f angry mf"],
  ["enraged:fred angry mf", "swearing:fred angry swear", "pleading:f ep mf", "crying:f eo mf tear", "sobbing:f ec streams mcry", "steaming:f ec steam", "sad relieved:f eo mf tear", "frowning:f eo mo", "anguished:f eo mcry"],
  ["fearful:f brow ew mo", "weary:f ec mcry", "mind blown:f eo mo boom", "screaming:f brow ew mo hands", "flushed:f ew ml blush", "hot:fred eo tongue sweat", "cold:fblue eo mt", "screaming again:f brow ew mo hands", "loudly crying:f ec streams mcry"]
];

const draw = (parts) =>
  `<svg viewBox="0 0 36 36" aria-hidden="true">${parts.split(" ").map((id) => `<use href="#${id}"/>`).join("")}</svg>`;

document.getElementById("emoji-grid").innerHTML = rows.map((row, index) => {
  const buttons = row.map((item, column) => {
    const [label, art] = item.split(":");
    if (!art) return `<button class="unknown" aria-label="${label}">▯</button>`;
    const state = index === 6 && column === 7 ? ' class="hovered"' : "";
    return `<button aria-label="${label}"${state}>${art.split("+").map(draw).join("")}</button>`;
  });
  return `<div class="emoji-row${index === 2 ? " mixed" : ""}">${buttons.join("")}</div>`;
}).join("");
```
